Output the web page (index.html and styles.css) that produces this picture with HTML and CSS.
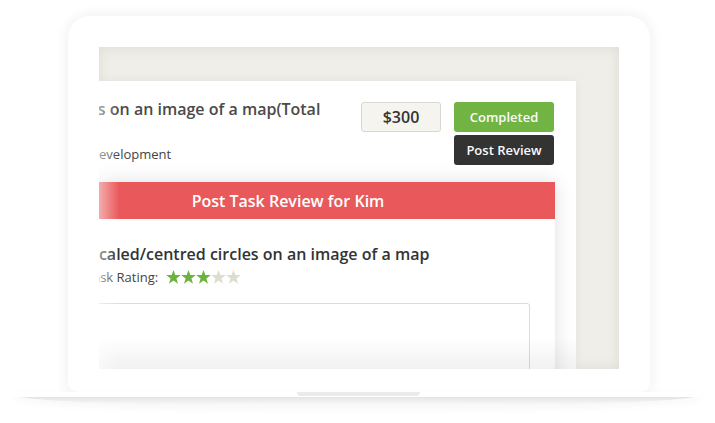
FILE: index.html
```html
<!DOCTYPE html>
<html lang="en">
<head>
    <meta charset="UTF-8">
    <title>Post Task Review</title>
    <link rel="stylesheet" href="styles.css">
</head>
<body>
<div class="laptop">
    <div class="lid">
        <div class="screen">
            <div class="panel">
                <div class="task-row">
                    <div class="task-info">
                        <div class="task-title">Draw scaled/centred circles on an image of a map(Total</div>
                        <div class="task-cat">Web Development</div>
                    </div>
                    <div class="price">$300</div>
                    <div class="actions">
                        <div class="btn btn-green">Completed</div>
                        <div class="btn btn-dark">Post Review</div>
                    </div>
                </div>

                <div class="modal">
                    <div class="modal-head">Post Task Review for Kim</div>
                    <div class="modal-body">
                        <h3>Draw scaled/centred circles on an image of a map</h3>
                        <div class="rating">
                            <span>Your Task Rating:</span>
                            <svg class="stars" width="75" height="14" viewBox="0 0 75 14">
                                <polygon class="on" points="7.5,0 9.3,5 14.8,5.1 10.4,8.4 12,13.8 7.5,10.6 3,13.8 4.6,8.4 0.2,5.1 5.7,5"/>
                                <polygon class="on" transform="translate(15 0)" points="7.5,0 9.3,5 14.8,5.1 10.4,8.4 12,13.8 7.5,10.6 3,13.8 4.6,8.4 0.2,5.1 5.7,5"/>
                                <polygon class="on" transform="translate(30 0)" points="7.5,0 9.3,5 14.8,5.1 10.4,8.4 12,13.8 7.5,10.6 3,13.8 4.6,8.4 0.2,5.1 5.7,5"/>
                                <polygon class="off" transform="translate(45 0)" points="7.5,0 9.3,5 14.8,5.1 10.4,8.4 12,13.8 7.5,10.6 3,13.8 4.6,8.4 0.2,5.1 5.7,5"/>
                                <polygon class="off" transform="translate(60 0)" points="7.5,0 9.3,5 14.8,5.1 10.4,8.4 12,13.8 7.5,10.6 3,13.8 4.6,8.4 0.2,5.1 5.7,5"/>
                            </svg>
                        </div>
                        <textarea class="review-box"></textarea>
                    </div>
                </div>

                <div class="fade-bottom"></div>
                <div class="fade-left"></div>
            </div>
        </div>
    </div>
    <div class="base">
        <div class="notch"></div>
    </div>
</div>
</body>
</html>
```

FILE: styles.css
```css
*{
    box-sizing: border-box;
}

html, body{
    margin: 0;
    padding: 0;
    background: #fff;
    font-family: "Open Sans", "Liberation Sans", sans-serif;
}

body{
    width: 715px;
    height: 423px;
    overflow: hidden;
}

.laptop{
    padding-top: 16px;
    display: flex;
    flex-direction: column;
    align-items: flex-start;
}

/* lid + screen */
.lid{
    margin-left: 68px;
    width: 582px;
    height: 376px;
    padding: 31px 31px 23px;
    background: #fff;
    border-radius: 22px 22px 9px 9px;
    box-shadow: 0 0 12px 3px rgba(0, 0, 0, 0.05);
    position: relative;
    z-index: 1;
}

.screen{
    width: 520px;
    height: 322px;
    padding-top: 34px;
    background: #efeee9;
    box-shadow: inset 0 0 14px rgba(0, 0, 0, 0.08);
    overflow: hidden;
}

.panel{
    position: relative;
    width: 477px;
    height: 288px;
    padding: 17px 22px 0 0;
    background: #fff;
    box-shadow: 0 0 10px rgba(0, 0, 0, 0.05);
}

/* task row */
.task-row{
    display: flex;
    align-items: flex-start;
}

.task-info{
    flex: 1;
    min-width: 0;
    white-space: nowrap;
}

.task-title{
    margin-left: -206px;
    font-size: 16px;
    font-weight: 600;
    line-height: 22px;
    color: #4a4a4a;
}

.task-cat{
    margin: 25px 0 0 -40px;
    font-size: 13px;
    line-height: 18px;
    color: #444;
}

.price{
    width: 80px;
    height: 30px;
    margin: 4px 13px 0 0;
    display: flex;
    align-items: center;
    justify-content: center;
    background: #f5f4ef;
    border: 1px solid #d9d8d0;
    border-radius: 3px;
    font-size: 16px;
    font-weight: 600;
    color: #333;
}

.actions{
    margin-top: 4px;
    display: flex;
    flex-direction: column;
    gap: 3px;
}

.btn{
    width: 100px;
    height: 30px;
    display: flex;
    align-items: center;
    justify-content: center;
    border-radius: 3px;
    font-size: 13px;
    font-weight: 600;
    color: #fafafa;
}

.btn-green{
    background: #72b443;
}

.btn-dark{
    background: #333;
}

/* review modal */
.modal{
    margin: 17px -1px 0 -78px;
    background: #fff;
    box-shadow: 0 0 18px rgba(0, 0, 0, 0.13);
}

.modal-head{
    height: 37px;
    padding-top: 1px;
    line-height: 37px;
    text-align: center;
    background: #e9595b;
    color: #fff;
    font-size: 16px;
    font-weight: 600;
}

.modal-body{
    padding: 24px 25px 0;
}

.modal-body h3{
    margin: 0;
    font-size: 16px;
    font-weight: 600;
    line-height: 22px;
    color: #333;
    white-space: nowrap;
}

.rating{
    margin: 2px 0 0 8px;
    display: flex;
    align-items: center;
    gap: 8px;
    font-size: 13px;
    line-height: 20px;
    color: #444;
    white-space: nowrap;
}

.stars .on{
    fill: #6cb33e;
}

.stars .off{
    fill: #dcdccf;
}

.review-box{
    display: block;
    width: 100%;
    height: 90px;
    margin-top: 16px;
    border: 1px solid #dcdcdc;
    border-radius: 3px;
    resize: none;
    background: #fff;
}

/* fades over the cropped screen */
.fade-bottom{
    position: absolute;
    left: 0;
    right: 0;
    bottom: 0;
    height: 32px;
    background: linear-gradient(rgba(0, 0, 0, 0), rgba(0, 0, 0, 0.055));
    z-index: 2;
}

.fade-left{
    position: absolute;
    top: 0;
    bottom: 0;
    left: 0;
    width: 20px;
    background: linear-gradient(to right, rgba(255, 255, 255, 0.5), rgba(255, 255, 255, 0));
    z-index: 3;
}

/* base */
.base{
    margin-left: 13px;
    width: 689px;
    height: 14px;
    background: linear-gradient(#fff 0, #fff 5px, #e4e4e4 5px, #efefef 9px, #fbfbfb 14px);
    border-radius: 3px 3px 50% 50% / 3px 3px 100% 100%;
    box-shadow: 0 3px 8px rgba(0, 0, 0, 0.04);
    position: relative;
    z-index: 2;
}

.notch{
    margin-left: 284px;
    width: 123px;
    height: 4px;
    background: #ebebeb;
    border-radius: 0 0 5px 5px;
}
```
